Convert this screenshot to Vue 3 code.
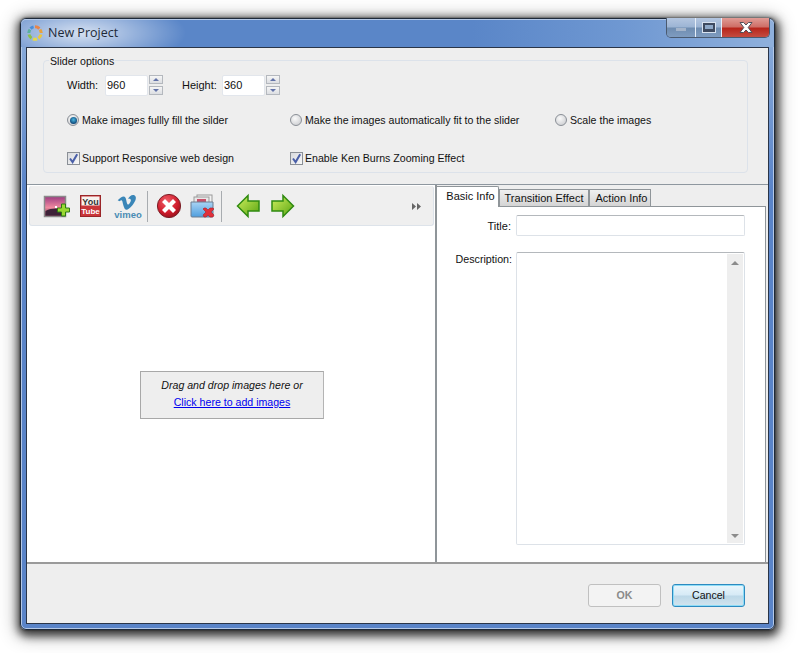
<script setup>
const radios = [
  { label: 'Make images fullly fill the silder', on: true, w: 223 },
  { label: 'Make the images automatically fit to the slider', on: false, w: 265 },
  { label: 'Scale the images', on: false, w: 110 },
]
const checks = [
  { label: 'Support Responsive web design', w: 223 },
  { label: 'Enable Ken Burns Zooming Effect', w: 200 },
]
</script>

<template>
  <div class="stage">
    <div class="window">
      <header class="titlebar">
        <svg class="logo" width="16" height="16" viewBox="0 0 16 16">
          <g fill="none" stroke-width="3">
            <path d="M8 1.800A6.200 6.200 0 0 1 12.400 3.600" stroke="#e8854a" />
            <path d="M13 4.600A6.200 6.200 0 0 1 14.200 8" stroke="#e9a23c" />
            <path d="M14 9.500A6.200 6.200 0 0 1 11.500 13.200" stroke="#edc83c" />
            <path d="M10 14A6.200 6.200 0 0 1 6 14" stroke="#e6d84a" />
            <path d="M4.500 13.200A6.200 6.200 0 0 1 2 9.500" stroke="#8cc04a" />
            <path d="M1.800 8A6.200 6.200 0 0 1 3 4.600" stroke="#58b0a0" />
            <path d="M3.600 3.600A6.200 6.200 0 0 1 6.600 1.900" stroke="#4a8ed8" />
          </g>
        </svg>
        <span class="title">New Project</span>
        <div class="caption">
          <div class="cap min"><i></i></div>
          <div class="cap max"><i></i></div>
          <div class="cap close">
            <svg width="14" height="11" viewBox="0 0 14 11"><path d="M1 .5h3.600L7 3l2.400-2.500H13L9.200 5.500l3.800 5H9.400L7 8l-2.400 2.500H1l3.800-5z" fill="#fff" stroke="#50505a" stroke-width="1" /></svg>
          </div>
        </div>
      </header>

      <main class="client">
        <section class="options">
          <div class="fieldset">
            <span class="legend">Slider options</span>
            <div class="row dims">
              <label class="dimlabel">Width:</label>
              <div class="num">960</div>
              <div class="spin"><b><em class="up"></em></b><b><em class="down"></em></b></div>
              <label class="dimlabel second">Height:</label>
              <div class="num">360</div>
              <div class="spin"><b><em class="up"></em></b><b><em class="down"></em></b></div>
            </div>
            <div class="row radios">
              <div v-for="r in radios" :key="r.label" class="opt" :style="{ width: r.w + 'px' }">
                <span class="radio" :class="{ on: r.on }"></span>
                <span>{{ r.label }}</span>
              </div>
            </div>
            <div class="row checks">
              <div v-for="c in checks" :key="c.label" class="opt" :style="{ width: c.w + 'px' }">
                <span class="check">
                  <svg width="13" height="13" viewBox="0 0 13 13"><path d="M3 6.500l2.600 3.600L10.200 2.200" fill="none" stroke="#4a5fa8" stroke-width="2" /></svg>
                </span>
                <span>{{ c.label }}</span>
              </div>
            </div>
          </div>
        </section>

        <section class="middle">
          <div class="left">
            <div class="toolbar">
              <svg class="tool" width="28" height="26" viewBox="0 0 28 26">
                <defs>
                  <linearGradient id="sunset" x1="0" y1="0" x2="0" y2="1">
                    <stop offset="0" stop-color="#9c3a80" />
                    <stop offset=".55" stop-color="#f08aa0" />
                    <stop offset="1" stop-color="#6a3048" />
                  </linearGradient>
                </defs>
                <rect x="1.500" y="3.500" width="21" height="20" fill="url(#sunset)" stroke="#8a8a8a" stroke-width="1.500" />
                <path d="M2.500 18c6-3 12-3 19-1v5.500h-19z" fill="#3d2238" />
                <rect x="12" y="13" width="2" height="2" fill="#fff" />
                <path d="M18 10h4v4h4v4h-4v4h-4v-4h-4v-4h4z" transform="translate(.5 1)" fill="#9ad832" stroke="#2c7a14" />
              </svg>
              <svg class="tool yt" width="22" height="26" viewBox="0 0 22 26">
                <rect x=".5" y="2.500" width="20" height="21" fill="#c9363a" stroke="#9a2528" />
                <rect x="1.500" y="3.500" width="18" height="9" fill="#f6f2ee" />
                <text x="10.500" y="11.500" class="yt1">You</text>
                <text x="10.500" y="21" class="yt2">Tube</text>
              </svg>
              <svg class="tool vm" width="30" height="27" viewBox="0 0 30 27">
                <path transform="translate(1 1.500) scale(.92 .9)" d="M4 6.500C8 2 11 1 12.500 3.500c1 2 1.400 7 2.600 7.600 1.200.4 3.500-3.300 3.200-5-.3-1.800-2-1.500-3-1C16.400 1.500 20-.5 22.500 1c2.500 1.800 1 6-1.500 9.500-2.500 3.400-5.500 6.500-7.500 6.500-2.200 0-3-4-4-7.500C9 6.500 8.500 5.500 6 7.500z" fill="#3a86b8" />
                <text x="15" y="25" class="vtext">vimeo</text>
              </svg>
              <span class="sep first"></span>
              <svg class="tool stop" width="26" height="26" viewBox="0 0 26 26">
                <defs>
                  <radialGradient id="red" cx=".4" cy=".3" r=".8">
                    <stop offset="0" stop-color="#f0606a" />
                    <stop offset=".6" stop-color="#d01c2c" />
                    <stop offset="1" stop-color="#8a1018" />
                  </radialGradient>
                </defs>
                <circle cx="13" cy="13" r="11.600" fill="url(#red)" stroke="#7a2028" />
                <path d="M9 6l4 4 4-4 3 3-4 4 4 4-3 3-4-4-4 4-3-3 4-4-4-4z" fill="#fff" />
              </svg>
              <svg class="tool folder" width="26" height="26" viewBox="0 0 26 26">
                <defs>
                  <linearGradient id="blue" x1="0" y1="0" x2="0" y2="1">
                    <stop offset="0" stop-color="#a9d4f4" />
                    <stop offset="1" stop-color="#4f9ede" />
                  </linearGradient>
                </defs>
                <rect x="7" y="2" width="15" height="12" fill="#f2f2f2" stroke="#9a9a9a" />
                <rect x="4" y="4" width="15" height="10" fill="#e8e8e8" stroke="#9a9a9a" />
                <rect x="7" y="6" width="9" height="4" fill="#c9506a" />
                <path d="M1 9h22v14a1 1 0 0 1-1 1H2a1 1 0 0 1-1-1z" fill="url(#blue)" stroke="#6c7c90" />
                <path d="M14 15l2 0 2 2 2-2 3 0 1 1-3 3 3 3-1 2-3 0-2-2-2 2-2 0-1-2 3-3-3-3z" fill="#e0303a" stroke="#a82028" stroke-width=".6" />
              </svg>
              <span class="sep second"></span>
              <svg class="tool arrow" width="24" height="26" viewBox="0 0 24 26">
                <defs>
                  <linearGradient id="grn" x1="0" y1="0" x2="1" y2="1">
                    <stop offset="0" stop-color="#d2f060" />
                    <stop offset="1" stop-color="#58a410" />
                  </linearGradient>
                </defs>
                <path d="M1.500 13L12 2.500V8h11v10H12v5.500z" fill="url(#grn)" stroke="#2f8a10" stroke-width="1.500" />
              </svg>
              <svg class="tool arrow r" width="24" height="26" viewBox="0 0 24 26">
                <path d="M22.500 13L12 2.500V8H1v10h11v5.500z" fill="url(#grn)" stroke="#2f8a10" stroke-width="1.500" />
              </svg>
              <span class="more">
                <svg width="9" height="7" viewBox="0 0 9 7"><path d="M0 0l4 3.500L0 7zM5 0l4 3.500L5 7z" fill="#666" /></svg>
              </span>
            </div>
            <div class="canvas">
              <div class="dropbox">
                <em>Drag and drop images here or</em>
                <a>Click here to add images</a>
              </div>
            </div>
          </div>

          <div class="right">
            <div class="tabs">
              <span class="tab active">Basic Info</span>
              <span class="tab t2">Transition Effect</span>
              <span class="tab t3">Action Info</span>
            </div>
            <div class="pane">
              <div class="field title-row">
                <label>Title:</label>
                <div class="input"></div>
              </div>
              <div class="field desc-row">
                <label>Description:</label>
                <div class="input area">
                  <div class="scroll">
                    <em class="sup"></em>
                    <em class="sdown"></em>
                  </div>
                </div>
              </div>
            </div>
          </div>
        </section>

        <footer class="actions">
          <div class="btn ok">OK</div>
          <div class="btn cancel">Cancel</div>
        </footer>
      </main>
    </div>
  </div>
</template>

<style>
html, body { margin: 0; background: #fff; }
</style>

<style scoped>
.stage {
  box-sizing: border-box;
  width: 799px;
  height: 653px;
  padding: 18px 0 0 20px;
  overflow: hidden;
}
.window {
  box-sizing: border-box;
  width: 755px;
  height: 612px;
  padding: 0 5px 5px;
  display: flex;
  flex-direction: column;
  border: 1px solid #1e2a3a;
  border-radius: 6px;
  background: linear-gradient(180deg, #8fb0dc 0, #5a84c8 170px);
  box-shadow: inset 0 0 0 1px #b4c8e6, 0 0 2px rgba(0,0,0,.7), 1px 3px 9px 3px rgba(0,0,0,.7), 0 3px 18px 4px rgba(0,0,0,.3);
  font: 10.600px/14px "Liberation Sans", Arial, sans-serif;
  color: #111;
}
.titlebar {
  height: 28px;
  flex: none;
  display: flex;
  align-items: center;
  margin: 0 -5px;
  padding: 0 4px 0 5px;
  border-radius: 5px 5px 0 0;
  background:
    radial-gradient(ellipse 105px 34px at 60px 14px, rgba(255,255,255,.75), rgba(255,255,255,0)),
    linear-gradient(90deg, #5a86c8 0, #5a86c8 60%, #6f98d2 80%, #8fb0dc 100%);
  box-shadow: inset 0 1px 0 #b4c8e6;
}
.logo { margin: 0 0 0 1px; flex: none; }
.title { margin: 0 0 0 5px; font: 12.500px/16px "Open Sans", "Noto Sans", sans-serif; color: #1e2a38; }
.caption {
  margin-left: auto;
  align-self: flex-start;
  display: flex;
  height: 20px;
  margin-top: -1px;
  border: 1px solid #4a5a70;
  border-top: none;
  border-radius: 0 0 5px 5px;
  overflow: hidden;
  box-sizing: border-box;
}
.cap {
  height: 100%;
  display: flex;
  align-items: center;
  justify-content: center;
  background: linear-gradient(#b4c6e0 0, #9cb4d4 48%, #6e8cb0 52%, #7f9cc0 100%);
}
.min { width: 28px; border-right: 1px solid #e6eef8; }
.min i { width: 10px; height: 3px; margin-top: 3px; background: #a4b4ca; }
.max { width: 25px; border-right: 1px solid #e6eef8; }
.max i { box-sizing: border-box; width: 12px; height: 9px; border: solid #3e4a60; border-width: 2px 2px 3px; box-shadow: 0 0 0 1px #d8e2f0; background: #8ea8c8; }
.close { width: 47px; background: linear-gradient(#e09c96 0, #cf7068 45%, #b8261c 55%, #c44c40 100%); }
.client {
  flex: 1;
  min-height: 0;
  display: flex;
  flex-direction: column;
  border: 1px solid #2a3548;
  background: #eee;
}
.options {
  flex: none;
  box-sizing: border-box;
  height: 137px;
  padding: 12px 20px 0 16px;
  border-bottom: 1px solid #8e979f;
}
.fieldset {
  position: relative;
  box-sizing: border-box;
  height: 113px;
  border: 1px solid #dce2ea;
  border-radius: 4px;
  padding: 13px 0 0 23px;
}
.legend {
  position: absolute;
  left: 5px; top: -7px;
  padding: 0 1px;
  background: #eee;
}
.row { display: flex; align-items: center; }
.dims { height: 22px; font-size: 11px; }
.dimlabel { width: 38px; flex: none; line-height: 20px; }
.dimlabel.second { width: 40px; margin-left: 19px; }
.num {
  box-sizing: border-box;
  width: 43px; height: 21px;
  padding: 2px 0 0 1px;
  background: #fff;
  border: 1px solid #e2e6ec;
  border-radius: 2px;
}
.spin { margin-left: 1px; width: 14px; display: flex; flex-direction: column; gap: 2px; }
.spin b {
  box-sizing: border-box;
  display: flex; align-items: center; justify-content: center;
  height: 9px;
  border: 1px solid #b4b8be;
  background: linear-gradient(#f6f6f6, #dcdee2);
}
.up, .down { width: 0; height: 0; border: 3.500px solid transparent; }
.up { border-bottom-color: #6272a8; border-top: 0; }
.down { border-top-color: #6272a8; border-bottom: 0; }
.radios { margin-top: 14px; height: 20px; }
.checks { margin-top: 18px; height: 20px; }
.opt { display: flex; align-items: center; flex: none; white-space: nowrap; }
.radio {
  flex: none;
  box-sizing: border-box;
  width: 12px; height: 12px;
  margin-right: 3px;
  border-radius: 50%;
  border: 1px solid #8a8f96;
  background: radial-gradient(circle at 40% 35%, #fafafa, #c4c6ca);
  position: relative;
}
.radio.on::after {
  content: '';
  position: absolute;
  left: 1.500px; top: 1.500px;
  width: 7px; height: 7px;
  border-radius: 50%;
  background: radial-gradient(circle at 50% 40%, #4ab6e0, #0e4a7c 70%);
}
.check {
  flex: none;
  box-sizing: border-box;
  width: 13px; height: 13px;
  margin-right: 2px;
  border: 1px solid #8a8f96;
  background: linear-gradient(135deg, #d8dade, #f8f8f8);
  display: flex;
}
.check svg { margin: -1px; }
.middle { flex: 1; min-height: 0; display: flex; }
.left {
  width: 410px;
  flex: none;
  display: flex;
  flex-direction: column;
  border-right: 2px solid #8f9599;
  box-sizing: border-box;
  background: #fff;
}
.toolbar {
  flex: none;
  box-sizing: border-box;
  height: 40px;
  width: 405px;
  display: flex;
  align-items: center;
  padding: 1px 0 0 13px;
  margin: 1px 0 0 2px;
  background: #efefef;
  border: 1px solid #dde3ea;
  border-top: none;
  border-radius: 3px;
  position: relative;
}
.tool { flex: none; display: block; }
.yt { margin-left: 9px; }
.yt1 { font: bold 9px "Liberation Sans", sans-serif; text-anchor: middle; fill: #333; }
.yt2 { font: bold 8px "Liberation Sans", sans-serif; text-anchor: middle; fill: #fff; }
.vm { margin-left: 11px; }
.vtext { font: bold 9.500px "Liberation Sans", sans-serif; text-anchor: middle; fill: #4a8cb4; }
.sep { flex: none; width: 1px; height: 31px; background: #a8acb0; }
.sep.first { margin: 0 8px 0 4px; }
.stop { margin-right: 8px; }
.sep.second { margin: 0 14px 0 5px; }
.arrow.r { margin-left: 11px; }
.more { position: absolute; right: 12px; top: 17px; display: flex; }
.canvas { flex: 1; display: flex; align-items: center; justify-content: center; padding: 2px 0 0 2px; }
.dropbox {
  box-sizing: border-box;
  width: 184px;
  height: 48px;
  padding-top: 5px;
  background: #eee;
  border: 1px solid #a8a8a8;
  border-right-color: #b4b4b4;
  text-align: center;
  line-height: 17px;
}
.dropbox em, .dropbox a { display: block; }
.dropbox a { color: #0000ee; text-decoration: underline; }
.right { flex: 1; min-width: 0; display: flex; flex-direction: column; font-size: 11px; }
.tabs { flex: none; height: 21px; display: flex; align-items: flex-end; position: relative; z-index: 1; }
.tab {
  box-sizing: border-box;
  height: 17px;
  padding: 1px 0 0;
  border: 1px solid #8f9599;
  border-bottom: none;
  text-align: center;
  background: linear-gradient(#f0f0f0, #d4d4d4);
}
.tab.active {
  width: 62px; height: 21px;
  margin-bottom: -1px;
  padding: 2px 0 0 6px;
  background: #fff;
  border-left: none;
  border-radius: 0 2px 0 0;
}
.t2 { width: 90px; }
.t3 { width: 62px; padding-left: 3px; }
.pane {
  flex: 1;
  min-height: 0;
  box-sizing: border-box;
  margin-right: 2px;
  background: #fff;
  border: 1px solid #8f9599;
  border-width: 1px 1px 0 0;
  padding: 8px 20px 17px 0;
  display: flex;
  flex-direction: column;
}
.field { display: flex; }
.field label { width: 74px; text-align: right; margin-right: 5px; flex: none; }
.title-row { height: 21px; align-items: center; }
.desc-row { flex: 1; min-height: 0; margin-top: 16px; }
.desc-row label { font-size: 10.700px; width: 75px; margin-right: 4px; }
.input {
  flex: 1;
  box-sizing: border-box;
  border: 1px solid #dde2e8;
  border-top-color: #b4b8bc;
  border-radius: 2px;
  background: #fff;
}
.title-row .input { height: 21px; }
.area { display: flex; justify-content: flex-end; padding: 1px 1px 1px 0; }
.scroll {
  box-sizing: border-box;
  width: 16px;
  background: #eee;
  display: flex;
  flex-direction: column;
  justify-content: space-between;
  align-items: center;
  padding: 7px 0 5px;
}
.sup, .sdown { width: 0; height: 0; border: 4px solid transparent; }
.sup { border-bottom-color: #8c8c8c; border-top: 0; }
.sdown { border-top-color: #8c8c8c; border-bottom: 0; }
.actions {
  flex: none;
  height: 61px;
  box-sizing: border-box;
  border-top: 2px solid #9a9a9a;
  display: flex;
  justify-content: flex-end;
  align-items: flex-start;
  gap: 11px;
  padding: 20px 23px 0 0;
}
.btn {
  box-sizing: border-box;
  width: 73px; height: 23px;
  border-radius: 3px;
  text-align: center;
  line-height: 21px;
}
.ok { border: 1px solid #c0c0c0; background: #f3f3f3; color: #8a8a8a; font-weight: 700; }
.cancel {
  border: 1px solid #2c8ac0;
  background: linear-gradient(#eaf6fc 0, #d6eaf6 48%, #bcd8e8 52%, #d2e4ee 100%);
  box-shadow: inset 0 0 0 1px #8edcf6;
}
</style>
